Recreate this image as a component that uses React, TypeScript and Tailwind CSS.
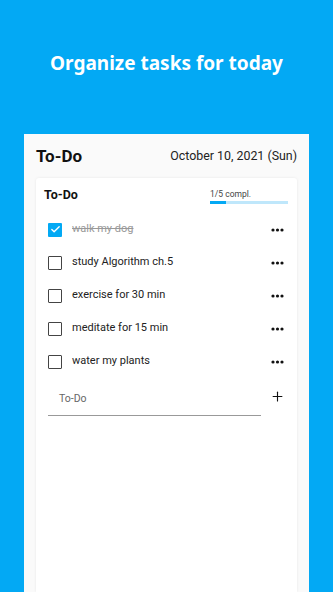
import { Check, Plus } from 'lucide-react';

const tasks = [
  { text: 'walk my dog', done: true },
  { text: 'study Algorithm ch.5', done: false },
  { text: 'exercise for 30 min', done: false },
  { text: 'meditate for 15 min', done: false },
  { text: 'water my plants', done: false },
];

function Dots() {
  return (
    <svg width="13" height="4" viewBox="0 0 13 4" className="text-[#111]">
      <circle cx="2" cy="2" r="1.6" fill="currentColor" />
      <circle cx="6.5" cy="2" r="1.6" fill="currentColor" />
      <circle cx="11" cy="2" r="1.6" fill="currentColor" />
    </svg>
  );
}

export default function App() {
  const done = tasks.filter((t) => t.done).length;

  return (
    <div className="h-[592px] w-full bg-[#03a9f4] flex flex-col overflow-hidden font-['Roboto',sans-serif]">
      {/* Hero title */}
      <div className="h-[134px] shrink-0 flex items-center justify-center pb-[8px]">
        <h1 className="text-white text-[19px] font-bold font-['Noto_Sans',sans-serif]">
          Organize tasks for today
        </h1>
      </div>

      {/* Phone panel */}
      <div className="mx-[24px] flex-1 bg-[#fafafa] px-[12px] flex flex-col">
        <div className="h-[44px] flex items-center justify-between">
          <h2 className="text-[17px] font-bold text-[#111] pt-[2px]">To-Do</h2>
          <span className="text-[12.4px] text-[#222] pt-[1px]">October 10, 2021 (Sun)</span>
        </div>

        <div className="flex-1 bg-white rounded-t-[3px] shadow-[0_0_3px_rgba(0,0,0,0.08)]">
          <div className="h-[35px] flex items-center justify-between pl-[8px] pr-[9px]">
            <h3 className="text-[12.5px] font-bold text-[#111]">To-Do</h3>
            <div className="w-[78px] flex flex-col pt-[1px]">
              <span className="text-[8.5px] text-[#444] leading-[10px]">
                {done}/{tasks.length} compl.
              </span>
              <div className="mt-[2px] h-[3px] bg-[#bfe7fb]">
                <div className="h-full bg-[#03a9f4]" style={{ width: `${(done / tasks.length) * 100}%` }} />
              </div>
            </div>
          </div>

          <ul className="flex flex-col">
            {tasks.map((t) => (
              <li key={t.text} className="h-[33px] flex items-center pl-[12px] pr-[13px]">
                {t.done ? (
                  <span className="w-[14px] h-[14px] bg-[#03a9f4] rounded-[1px] flex items-center justify-center">
                    <Check size={11} strokeWidth={3} className="text-white" />
                  </span>
                ) : (
                  <span className="w-[14px] h-[14px] border-[1.5px] border-[#444] rounded-[1px]" />
                )}
                <span
                  className={
                    t.done
                      ? 'ml-[10px] flex-1 text-[11px] text-[#999] line-through'
                      : 'ml-[10px] flex-1 text-[11px] text-[#222]'
                  }
                >
                  {t.text}
                </span>
                <Dots />
              </li>
            ))}
          </ul>

          <div className="flex items-start pl-[12px] pr-[12px] pt-[4px]">
            <div className="w-[213px] h-[34px] border-b border-[#999] flex items-center pl-[11px] pt-[1px]">
              <span className="text-[10.5px] text-[#666]">To-Do</span>
            </div>
            <div className="flex-1 h-[29px] flex items-center justify-end">
              <Plus size={15} strokeWidth={1.8} className="text-[#111]" />
            </div>
          </div>
        </div>
      </div>
    </div>
  );
}
